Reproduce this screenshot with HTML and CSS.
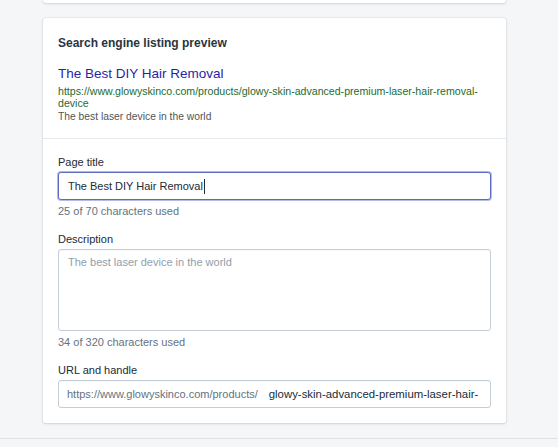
FILE: index.html
```html
<!DOCTYPE html>
<html lang="en">
<head>
<meta charset="utf-8">
<title>Search engine listing preview</title>
<link rel="stylesheet" href="styles.css">
</head>
<body>
  <div class="layout">
    <div class="card card-stub"></div>
    <section class="card">
      <div class="card-section">
        <h2 class="card-heading">Search engine listing preview</h2>
        <div class="serp">
          <div class="serp-title">The Best DIY Hair Removal</div>
          <div class="serp-url">https://www.glowyskinco.com/products/glowy-skin-advanced-premium-laser-hair-removal-device</div>
          <div class="serp-desc">The best laser device in the world</div>
        </div>
      </div>
      <div class="card-section card-section-sep">
        <div class="form-group">
          <div class="label">Page title</div>
          <div class="field field-focused"><span class="field-value">The Best DIY Hair Removal</span><span class="caret"></span></div>
          <div class="help">25 of 70 characters used</div>
        </div>
        <div class="form-group">
          <div class="label">Description</div>
          <div class="field field-multiline"><span class="placeholder">The best laser device in the world</span></div>
          <div class="help">34 of 320 characters used</div>
        </div>
        <div class="form-group">
          <div class="label">URL and handle</div>
          <div class="field"><span class="field-prefix">https://www.glowyskinco.com/products/</span><span class="field-value field-handle">glowy-skin-advanced-premium-laser-hair-</span></div>
        </div>
      </div>
    </section>
  </div>
  <div class="page-divider"></div>
</body>
</html>
```
FILE: styles.css
```css
html, body {
  margin: 0;
  padding: 0;
}
body {
  background: #f4f6f8;
  font-family: "Liberation Sans", Arial, sans-serif;
  color: #212b36;
  height: 447px;
  overflow: hidden;
}
.layout {
  margin-left: 43px;
  width: 463px;
}
.card {
  background: #fff;
  border-radius: 3px;
  box-shadow: 0 0 0 1px rgba(63, 63, 68, 0.05), 0 1px 3px 0 rgba(63, 63, 68, 0.15);
}
.card-stub {
  height: 3px;
  border-radius: 0 0 3px 3px;
  margin-bottom: 15px;
}
.card-section {
  padding: 16px 15px 14px;
}
.card-section-sep {
  border-top: 1px solid #e6e9ec;
  padding-bottom: 15px;
}
.card-heading {
  margin: 0;
  font-size: 12px;
  line-height: 18px;
  font-weight: 700;
  color: #2a3440;
}
.serp {
  margin-top: 13px;
}
.serp-title {
  font-size: 13.5px;
  line-height: 18px;
  color: #2a1fa6;
}
.serp-url {
  margin-top: 2px;
  font-size: 10.6px;
  line-height: 12px;
  color: #1e6b2f;
}
.serp-desc {
  margin-top: 1px;
  font-size: 10.3px;
  line-height: 14px;
  color: #545454;
}
.form-group + .form-group {
  margin-top: 14px;
}
.label {
  font-size: 11px;
  line-height: 14px;
  margin-bottom: 3px;
  color: #212b36;
}
.help {
  margin-top: 4px;
  font-size: 11px;
  line-height: 14px;
  color: #637381;
}
.field {
  box-sizing: border-box;
  height: 28px;
  border: 1px solid #c4cdd5;
  border-radius: 3px;
  padding: 0 10px 0 9px;
  display: flex;
  align-items: center;
  font-size: 11px;
  line-height: 14px;
  background: #fff;
  box-shadow: inset 0 1px 0 0 rgba(99, 115, 129, 0.05);
}
.field-focused {
  border-color: #5c6ac4;
  box-shadow: 0 0 0 1px rgba(92, 106, 196, 0.45);
}
.field-value {
  color: #212b36;
  white-space: nowrap;
}
.caret {
  display: inline-block;
  width: 1px;
  height: 15px;
  background: #212b36;
  margin-left: 1px;
}
.field-multiline {
  height: 82px;
  align-items: flex-start;
  padding-top: 5px;
}
.placeholder {
  color: #919eab;
}
.field-prefix {
  color: #637381;
  white-space: nowrap;
  margin-left: -1px;
  margin-right: 11px;
}
.field-handle {
  font-size: 11.4px;
}
.page-divider {
  margin-top: 15px;
  border-top: 1px solid #dfe3e8;
}
```
